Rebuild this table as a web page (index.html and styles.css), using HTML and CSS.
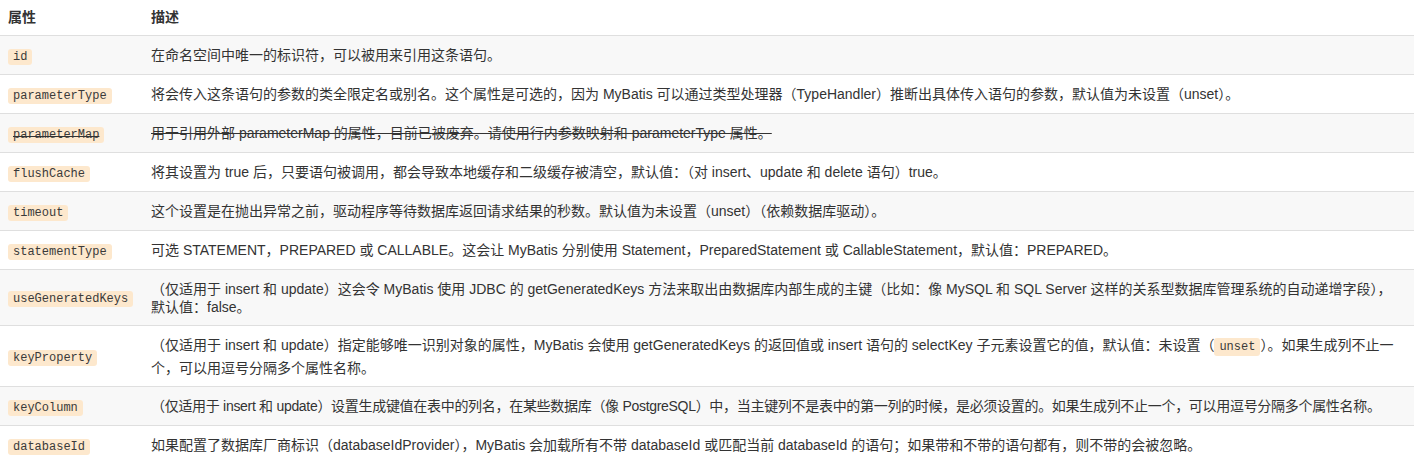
FILE: index.html
```html
<!DOCTYPE html>
<html lang="zh-CN">
<head>
  <meta charset="UTF-8">
  <title>select 元素的属性</title>
  <link rel="stylesheet" href="styles.css">
</head>
<body>
  <table class="attr-table">
    <thead>
      <tr>
        <th class="col-name">属性</th>
        <th>描述</th>
      </tr>
    </thead>
    <tbody>
      <tr>
        <td class="col-name"><code>id</code></td>
        <td>在命名空间中唯一的标识符，可以被用来引用这条语句。</td>
      </tr>
      <tr>
        <td class="col-name"><code>parameterType</code></td>
        <td>将会传入这条语句的参数的类全限定名或别名。这个属性是可选的，因为 MyBatis 可以通过类型处理器（TypeHandler）推断出具体传入语句的参数，默认值为未设置（unset）。</td>
      </tr>
      <tr>
        <td class="col-name"><s><code>parameterMap</code></s></td>
        <td><s>用于引用外部 parameterMap 的属性，目前已被废弃。请使用行内参数映射和 parameterType 属性。</s></td>
      </tr>
      <tr>
        <td class="col-name"><code>flushCache</code></td>
        <td>将其设置为 true 后，只要语句被调用，都会导致本地缓存和二级缓存被清空，默认值：（对 insert、update 和 delete 语句）true。</td>
      </tr>
      <tr>
        <td class="col-name"><code>timeout</code></td>
        <td>这个设置是在抛出异常之前，驱动程序等待数据库返回请求结果的秒数。默认值为未设置（unset）（依赖数据库驱动）。</td>
      </tr>
      <tr>
        <td class="col-name"><code>statementType</code></td>
        <td>可选 STATEMENT，PREPARED 或 CALLABLE。这会让 MyBatis 分别使用 Statement，PreparedStatement 或 CallableStatement，默认值：PREPARED。</td>
      </tr>
      <tr>
        <td class="col-name"><code>useGeneratedKeys</code></td>
        <td>（仅适用于 insert 和 update）这会令 MyBatis 使用 JDBC 的 getGeneratedKeys 方法来取出由数据库内部生成的主键（比如：像 MySQL 和 SQL Server 这样的关系型数据库管理系统的自动递增字段），<br>默认值：false。</td>
      </tr>
      <tr>
        <td class="col-name"><code>keyProperty</code></td>
        <td>（仅适用于 insert 和 update）指定能够唯一识别对象的属性，MyBatis 会使用 getGeneratedKeys 的返回值或 insert 语句的 selectKey 子元素设置它的值，默认值：未设置（<code class="inline">unset</code>）。如果生成列不止一个，可以用逗号分隔多个属性名称。</td>
      </tr>
      <tr>
        <td class="col-name"><code>keyColumn</code></td>
        <td class="tight">（仅适用于 insert 和 update）设置生成键值在表中的列名，在某些数据库（像 PostgreSQL）中，当主键列不是表中的第一列的时候，是必须设置的。如果生成列不止一个，可以用逗号分隔多个属性名称。</td>
      </tr>
      <tr>
        <td class="col-name"><code>databaseId</code></td>
        <td>如果配置了数据库厂商标识（databaseIdProvider），MyBatis 会加载所有不带 databaseId 或匹配当前 databaseId 的语句；如果带和不带的语句都有，则不带的会被忽略。</td>
      </tr>
    </tbody>
  </table>
</body>
</html>
```

FILE: styles.css
```css
body {
  margin: 0;
  padding: 0;
  background: #fff;
  color: #333;
  font-family: "Liberation Sans", Arial, "Noto Sans CJK SC", sans-serif;
  font-size: 14px;
}
.attr-table {
  width: 100%;
  border-collapse: collapse;
  line-height: 18px;
}
.attr-table th {
  text-align: left;
  font-weight: bold;
  padding: 8px 8px 9px;
  border-bottom: 1px solid #dfdfdf;
}
.attr-table td {
  padding: 9.5px 8px;
  border-top: 1px solid #dfdfdf;
  vertical-align: middle;
}
.attr-table tbody tr:nth-child(odd) {
  background: #f8f8f8;
}
.col-name {
  width: 127px;
  white-space: nowrap;
}
.attr-table .tight {
  letter-spacing: -0.3px;
  white-space: nowrap;
}
.attr-table code {
  font-family: "Liberation Mono", "Courier New", monospace;
  font-size: 12px;
  line-height: 15px;
  padding: 1px 5px;
  background: #fde8cd;
  color: #3a3a3a;
  border-radius: 3px;
  letter-spacing: 0;
}
.attr-table code.inline {
  line-height: 23px;
  padding: 2px 5px;
}
.attr-table s {
  text-decoration: line-through;
}
```
